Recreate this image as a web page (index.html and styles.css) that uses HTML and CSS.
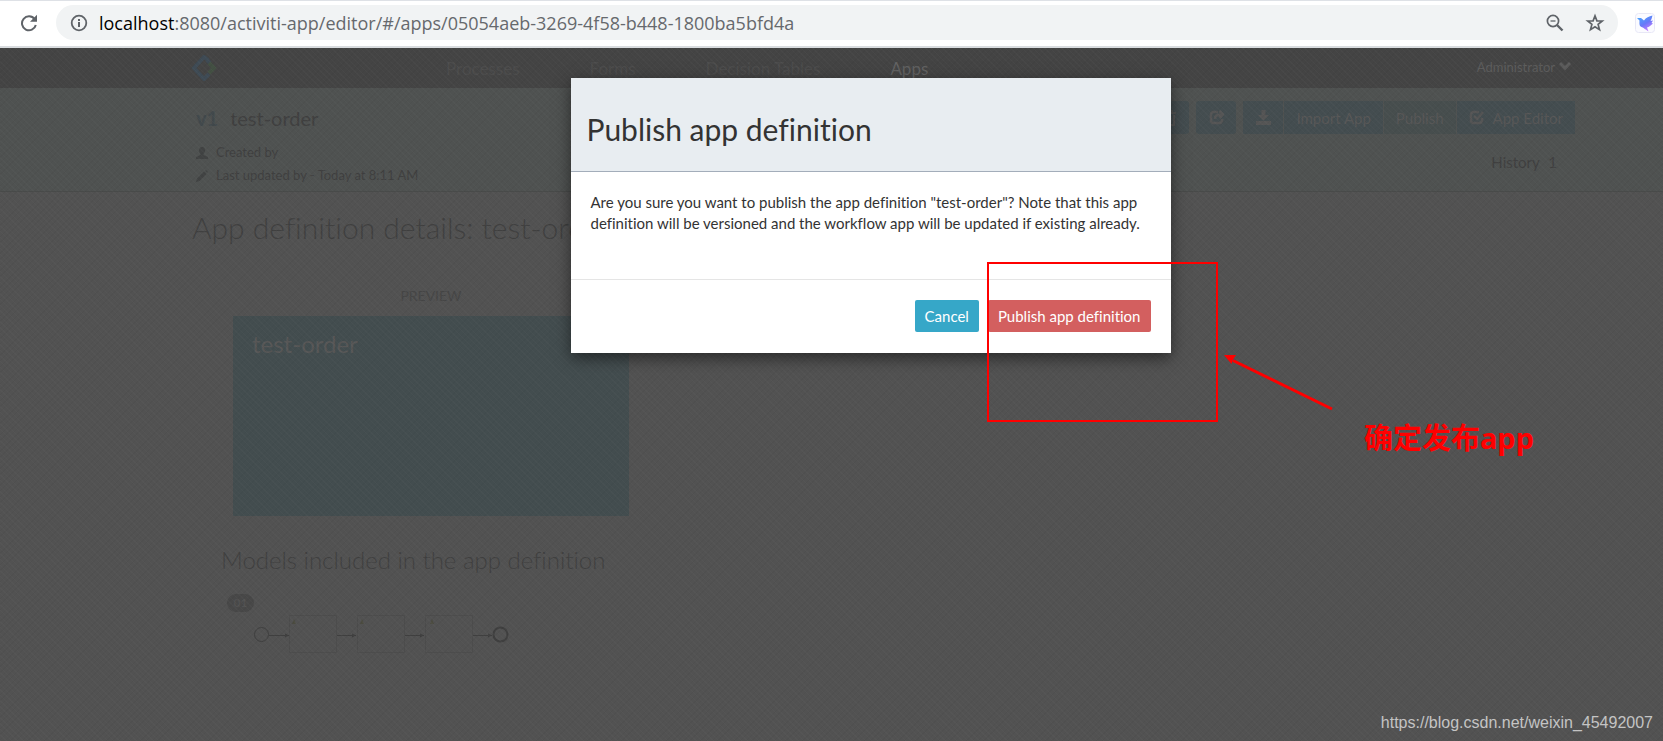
FILE: index.html
```html
<!DOCTYPE html>
<html lang="en">
<head>
<meta charset="utf-8">
<title>Activiti App Editor</title>
<link rel="stylesheet" href="styles.css">
</head>
<body>
<div class="window">
  <header class="browser">
    <button class="icon-btn" aria-label="Reload"><svg width="18" height="18" viewBox="0 0 18 18"><path d="M14.6 5.1A7 7 0 1 0 15.8 11" fill="none" stroke="#5f6368" stroke-width="2"/><path d="M17 .8v7h-7z" fill="#5f6368"/></svg></button>
    <div class="omnibox">
      <svg class="info" width="18" height="18" viewBox="0 0 18 18"><circle cx="9" cy="9" r="7.3" fill="none" stroke="#5f6368" stroke-width="1.8"/><path d="M8 8h2v5H8zM8 5h2v2H8z" fill="#5f6368"/></svg>
      <a class="url" href="#"><span class="host">localhost</span>:8080/activiti-app/editor/#/apps/05054aeb-3269-4f58-b448-1800ba5bfd4a</a>
      <button class="icon-btn" aria-label="Zoom"><svg width="18" height="18" viewBox="0 0 18 18"><circle cx="7" cy="7" r="5.6" fill="none" stroke="#5f6368" stroke-width="1.7"/><path d="M4.5 7h5" stroke="#5f6368" stroke-width="1.3"/><path d="M11 11l5.5 5.5" stroke="#5f6368" stroke-width="2.4"/></svg></button>
      <button class="icon-btn" aria-label="Bookmark"><svg width="20" height="20" viewBox="0 0 20 20"><path d="M10 2.8l1.9 5 5.4.2-4.200 3.400 1.400 5.200L10 13.700l-4.500 2.900 1.400-5.200L2.700 8l5.400-.2z" fill="none" stroke="#5f6368" stroke-width="1.7"/></svg></button>
    </div>
    <button class="extension" aria-label="Extension"><svg width="20" height="20" viewBox="0 0 20 20"><defs><linearGradient id="bird" x1="0" y1="0" x2=".6" y2="1"><stop offset="0" stop-color="#41b2ff"/><stop offset=".6" stop-color="#6878f8"/><stop offset="1" stop-color="#c77bff"/></linearGradient></defs><rect x=".5" y=".5" width="19" height="19" rx="3" fill="#fbfbff" stroke="#e8e8f6"/><path d="M2 5h4l3 2.500c2-3 5-4 8.500-5L16.500 6l-1 2 2.500-.5-1.500 2.500 1.500.5-3 2.500c-1 1-2 1-3 1.500l1.500 4c-3-2-4.500-3.500-7-4.500C4 13 4.500 10 4.500 7.500z" fill="url(#bird)"/></svg></button>
  </header>

  <div class="page">
    <nav class="topbar">
      <a class="logo" href="#" aria-label="Home"><svg width="26" height="26" viewBox="0 0 26 26" fill="none" stroke-width="4"><path d="M17 5l-4-3L3 13l10 11 5-5" stroke="#3f4b55"/><path d="M16 5l3 3" stroke="#3f4b55"/><path d="M18 8l5 5-5 5" stroke="#435043"/></svg></a>
      <a class="tab" href="#">Processes</a><a class="tab" href="#">Forms</a><a class="tab" href="#">Decision Tables</a><a class="tab active" href="#">Apps</a>
      <a class="user" href="#">Administrator <svg width="12" height="9" viewBox="0 0 12 9"><path d="M0 2l2-2 4 4 4-4 2 2-6 6.500z" fill="#5c5c5c"/></svg></a>
    </nav>
    <section class="subheader">
      <div class="meta">
        <h2 class="name"><span class="version">v1</span>test-order</h2>
        <p><svg width="12" height="12" viewBox="0 0 12 12"><path d="M6 0c2 0 3 1.500 3 3.500S8 6.500 7.500 7v1L12 10v2H0v-2l4.500-2V7C4 6.500 3 5.500 3 3.500S4 0 6 0z" fill="#414343"/></svg>Created by</p>
        <p><svg width="12" height="12" viewBox="0 0 12 12"><path d="M0 12l1-3.500L8 1.500 10.500 4l-7 7zM9 .8l1-.8 2 2-.8 1z" fill="#414343"/></svg>Last updated by - Today at 8:11 AM</p>
      </div>
      <div class="actions">
        <div class="buttons">
          <button aria-label="Delete"><svg width="14" height="16" viewBox="0 0 14 16" fill="none" stroke="#555" stroke-width="2"><path d="M0 3h14M4 3V1h6v2M2 5v10h10V5M5.500 6v7M8.500 6v7"/></svg></button>
          <button aria-label="Share"><svg width="15" height="15" viewBox="0 0 15 15" fill="none" stroke="#555" stroke-width="2.500"><path d="M9 2H3.500L2 3.500v8L3.500 13h8l1.500-2V9M6 9c0-4 3-4.500 8-4.500M10.500 1L14 4.500 10.500 8"/></svg></button>
          <div class="group">
            <button aria-label="Download"><svg width="15" height="15" viewBox="0 0 15 15"><path d="M5.500 0h4v5H13l-5.500 5.500L2 5h3.500zM0 11h15v4H0z" fill="#555"/></svg></button><button>Import App</button><button class="dim">Publish</button><button><svg width="15" height="15" viewBox="0 0 15 15" fill="none" stroke="#555" stroke-width="2.500"><path d="M10 2H3.500L2 3.500v8L3.500 13h8l1.500-2V8M5 6l3 3 6-7"/></svg>App Editor</button>
          </div>
        </div>
        <a class="history" href="#">History <span>1</span></a>
      </div>
    </section>
    <main class="content">
      <h1>App definition details: test-order</h1>
      <div class="details">
        <div class="preview"><div class="label">PREVIEW</div><div class="card">test-order</div></div>
        <h3>Models included in the app definition</h3>
        <span class="badge">01</span>
        <svg class="diagram" width="270" height="44" viewBox="0 0 270 44" fill="none" stroke="#3f3f3f">
          <circle cx="7.500" cy="22.500" r="7"/><circle cx="246.500" cy="22.500" r="7" stroke-width="2"/>
          <path d="M15 23.500h20M83 23.500h19M151 23.500h19M219 23.500h19"/>
          <path d="M31 21.500l4 2-4 2zM98 21.500l4 2-4 2zM166 21.500l4 2-4 2zM234 21.500l4 2-4 2z" fill="#3f3f3f" stroke="none"/>
          <path d="M35.500 3.500h47v37h-47zM103.500 3.500h47v37h-47zM171.500 3.500h47v37h-47z" stroke="#4c4c4c"/>
          <path d="M38 12l2-5 2 5zM106 12l2-5 2 5zM176 12l2-5 2 5z" fill="#4b4b40" stroke="none"/>
        </svg>
      </div>
    </main>
  </div>

  <div class="modal" role="dialog" aria-labelledby="modal-title">
    <div class="modal-header"><h2 id="modal-title">Publish app definition</h2></div>
    <p class="modal-body">Are you sure you want to publish the app definition "test-order"? Note that this app definition will be versioned and the workflow app will be updated if existing already.</p>
    <div class="modal-footer"><button class="cancel">Cancel</button><button class="publish">Publish app definition</button></div>
  </div>

  <div class="frame"></div>
  <svg class="arrow" width="112" height="60" viewBox="0 0 112 60"><path d="M9 7.500L108 56" stroke="#f00" stroke-width="3"/><path d="M0 2h12L9 6.500 7.500 11z" fill="#f00"/></svg>
  <div class="note">确定发布app</div>
  <div class="watermark">https://blog.csdn.net/weixin_45492007</div>
</div>
</body>
</html>
```
FILE: styles.css
```css
* { box-sizing: border-box; }
body { margin: 0; background: #525252; font-family: Lato, sans-serif; font-variant-ligatures: none; }
h1, h2, h3, p { margin: 0; font-weight: 400; }
a { text-decoration: none; color: inherit; }
button { font: inherit; border: 0; padding: 0; background: none; color: inherit; }
svg { display: block; flex: none; }

.window { position: relative; display: flex; flex-direction: column; min-height: 100vh; overflow: hidden; }

.browser { display: flex; align-items: center; height: 48px; padding: 0 8px 2px 20px; background: #fff; border-top: 1px solid #dee1e6; border-bottom: 2px solid #d9dcdf; }
.omnibox { display: flex; flex: 1; align-items: center; height: 35px; margin: 0 17px 0 18px; padding: 0 13px 0 14px; border-radius: 18px; background: #f1f3f4; }
.url { flex: 1; margin-left: 11px; color: #66696d; font: 18px/24px "Open Sans", sans-serif; white-space: nowrap; }
.host { color: #000; }
.omnibox .icon-btn + .icon-btn { margin-left: 21px; }

.page { position: relative; flex: 1; background: #525252; color: #404040; }
.page::after {
  content: ""; position: absolute; inset: 0; pointer-events: none;
  background:
    repeating-linear-gradient(45deg, rgba(255,255,255,.02) 0 1px, transparent 1px 4px),
    repeating-linear-gradient(-45deg, rgba(0,0,0,.03) 0 1px, transparent 1px 4px);
}
.topbar { display: flex; align-items: center; height: 40px; padding: 0 92px 0 191px; background: #444; color: #4c4c4c; font-size: 17px; }
.tab { margin-left: 70px; }
.logo + .tab { margin-left: 229px; }
.active { color: #616161; }
.user { display: flex; align-items: center; gap: 4px; margin-left: auto; padding-bottom: 3px; color: #5c5c5c; font-size: 13px; }

.subheader { display: flex; justify-content: space-between; height: 104px; padding: 13px 88px 0 196px; background: #4f5251; border-bottom: 1px solid #484a49; }
.name { margin: 4px 0 10px; font-size: 20px; line-height: 26px; }
.version { margin-right: 12px; color: #42494c; font-weight: 700; }
.meta p { display: flex; align-items: center; gap: 8px; font-size: 13px; line-height: 23px; }
.actions { display: flex; flex-direction: column; align-items: flex-end; }
.buttons { display: flex; gap: 7px; color: #575757; font-size: 15px; }
.buttons button { display: flex; align-items: center; justify-content: center; gap: 9px; min-width: 40px; height: 33px; padding: 0 12px; border-radius: 3px; background: #444d50; }
.group { display: flex; gap: 1px; }
.group button { border-radius: 0; }
.buttons .dim { background: #474e4e; }
.history { margin-top: 16px; padding-right: 18px; font-size: 15px; line-height: 24px; }
.history span { margin-left: 5px; }

.content { padding: 14px 192px; }
h1 { font-size: 30px; line-height: 42px; font-weight: 300; }
.details { padding: 0 29px; }
.preview { width: 396px; margin: 33px 0 0 12px; }
.label { padding-bottom: 5px; color: #464646; font-size: 14px; line-height: 30px; text-align: center; }
.card { height: 200px; padding: 12px 19px; background: #434d4f; color: #575757; font-size: 24px; line-height: 32px; }
h3 { margin-top: 27px; font-size: 24px; line-height: 34px; font-weight: 300; }
.badge { display: block; width: 27px; margin: 17px 0 0 6px; border-radius: 9px; background: #484848; color: #525252; font-size: 12px; line-height: 18px; text-align: center; font-weight: 700; }
.diagram { margin-left: 33px; }

.modal { position: absolute; top: 78px; left: calc(50% - 261px); width: 600px; background: #fff; color: #333; box-shadow: 0 5px 15px rgba(0,0,0,.5); }
.modal-header { padding: 30px 16px 21px; background: #e8edf1; border-bottom: 1px solid #a3adba; }
.modal-header h2 { font-size: 30px; line-height: 42px; }
.modal-body { padding: 20px 20px 45px; font-size: 15px; line-height: 21px; }
.modal-footer { display: flex; justify-content: flex-end; gap: 9px; padding: 20px 20px 21px; border-top: 1px solid #e5e5e5; }
.modal-footer button { height: 32px; padding: 0 10px; border-radius: 2px; background: #36a7c8; color: #fff; font-size: 15px; }
.modal-footer .publish { background: #d35f5f; }

.frame { position: absolute; left: 987px; top: 262px; width: 231px; height: 160px; border: 2px solid #f00; }
.arrow { position: absolute; left: 1224px; top: 353px; }
.note { position: absolute; left: 1364px; top: 418px; color: #f00; font: 700 29px/40px "Noto Sans", "Noto Sans CJK SC", sans-serif; }
.watermark { position: absolute; right: 10px; bottom: 7px; color: #c4c4c4; font: 16px/22px "Liberation Sans", sans-serif; }
```
